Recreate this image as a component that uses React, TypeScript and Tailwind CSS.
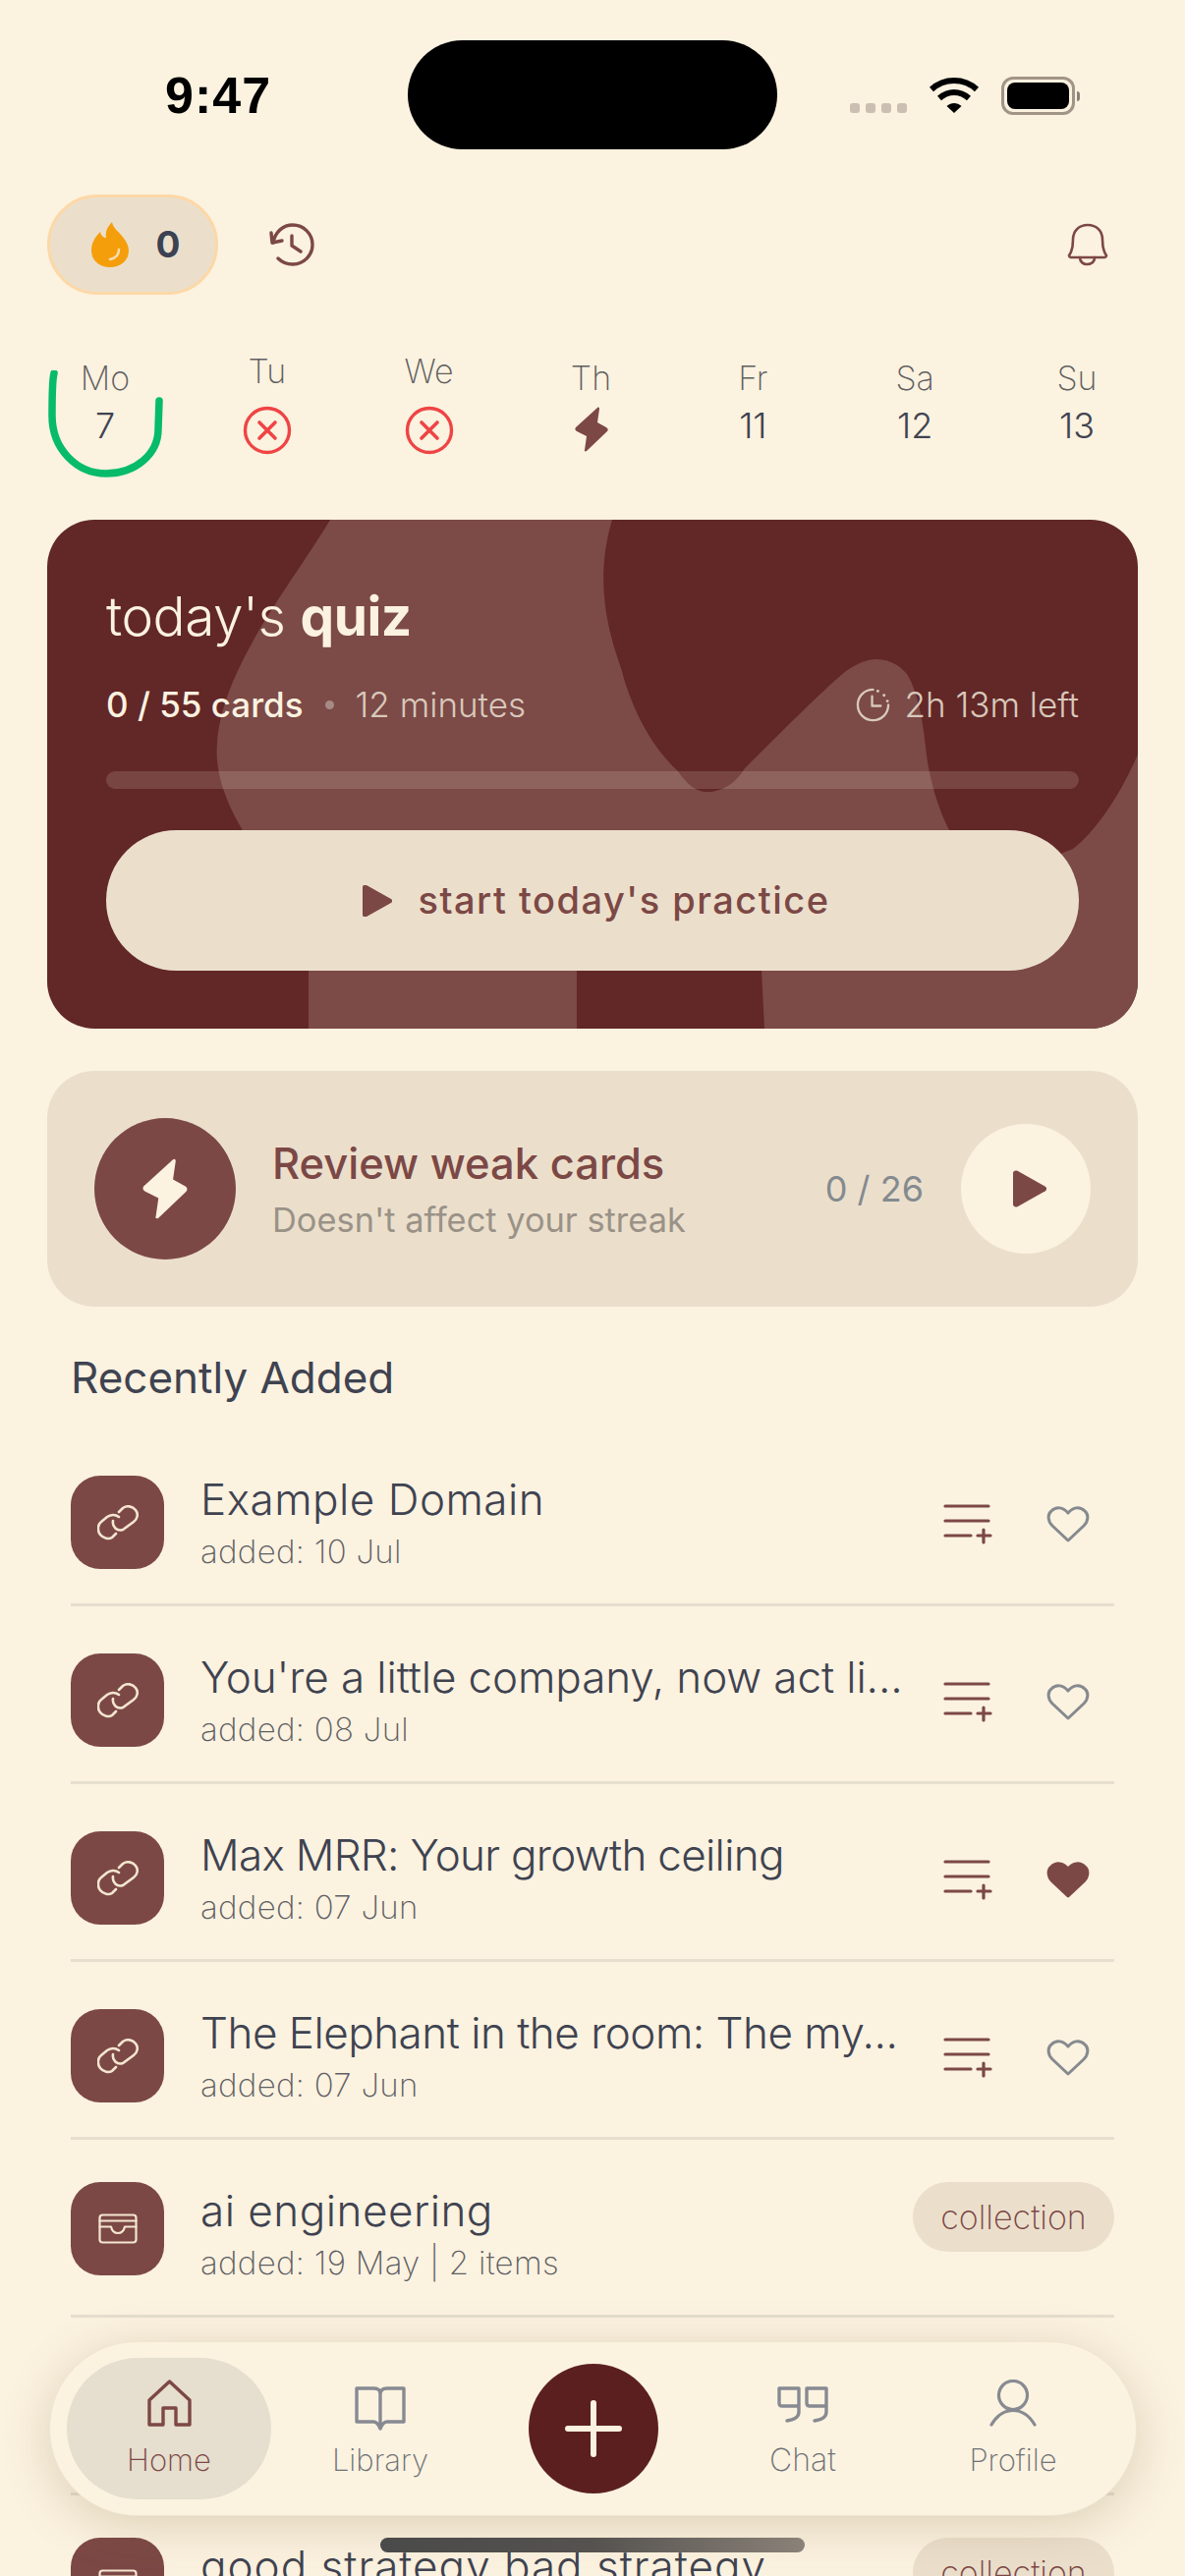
import React from "react";

const maroon = "#7c4845";
const gray = "#888a92";

function Flame() {
  return (
    <svg width="38" height="46" viewBox="0 0 38 46">
      <path d="M21 0 C22 6 27 9 31 14 C36 20 38 25 38 29 C38 39 30 46 19 46 C8 46 0 39 0 29 C0 21 4 15 9 10 C10 14 12 16 15 16 C14 10 16 5 21 0Z" fill="#f59e0b" />
      <path d="M19 38 C24 37 28 34 28 28" stroke="#f6dcae" strokeWidth="2.5" fill="none" strokeLinecap="round" />
    </svg>
  );
}

function HistoryIcon() {
  return (
    <svg width="46" height="44" viewBox="0 0 46 44" fill="none" stroke={maroon} strokeWidth="3.4" strokeLinecap="round" strokeLinejoin="round">
      <path d="M4 20 C6 9 14 2 24 2 C35 2 44 11 44 22 C44 33 35 42 24 42 C18 42 13 40 9 36" />
      <path d="M2 10 L3 20 L13 18" />
      <path d="M23 13 L23 23 L32 29" />
    </svg>
  );
}

function Bell() {
  return (
    <svg width="42" height="44" viewBox="0 0 42 44" fill="none" stroke={maroon} strokeWidth="2.6" strokeLinecap="round" strokeLinejoin="round">
      <path d="M2 33 C5 29 6 25 6 17 C6 8 12 2 21 2 C30 2 36 8 36 17 C36 25 37 29 40 33 C40 34 39 35 38 35 L4 35 C3 35 2 34 2 33Z" />
      <path d="M13 35 C13 40 17 42 20 42 C24 42 28 40 28 35" />
    </svg>
  );
}

function XCircle() {
  return (
    <svg width="50" height="50" viewBox="0 0 50 50" fill="none" stroke="#ef4444" strokeWidth="3.4" strokeLinecap="round">
      <circle cx="25" cy="25" r="22.5" />
      <path d="M17 17 L33 33 M33 17 L17 33" strokeWidth="3.6" />
    </svg>
  );
}

function Bolt({ color, w, h }: { color: string; w: number; h: number }) {
  return (
    <svg width={w} height={h} viewBox="0 0 34 46" fill={color}>
      <path d="M23 1 C24 0 25 1 25 2 L23 16 L32 21 C34 22 34 24 33 25 L12 45 C11 46 9 45 10 44 L12 30 L2 25 C0 24 0 22 1 21 Z" />
    </svg>
  );
}

function ClockDash() {
  return (
    <svg width="35" height="35" viewBox="0 0 36 36" fill="none" stroke="#d8c9bb" strokeWidth="2.4" strokeLinecap="round" strokeLinejoin="round">
      <path d="M18 2 C9 2 2 9 2 18 C2 27 9 34 18 34 C27 34 34 27 34 18" />
      <path d="M17 9 L17 19 L26 19" />
      <path d="M23 3.5 L23.1 3.5 M29.5 8 L29.6 8 M33 14 L33.1 14" strokeWidth="3" />
    </svg>
  );
}

function Play({ w, h, color }: { w: number; h: number; color: string }) {
  return (
    <svg width={w} height={h} viewBox="0 0 30 32" fill={color}>
      <path d="M0 2 C0 0 2 -1 4 0 L29 14 C30.5 15 30.5 17 29 18 L4 32 C2 33 0 32 0 30 Z" />
    </svg>
  );
}

function LinkIcon() {
  return (
    <svg width="42" height="36" viewBox="0 0 42 36" fill="none" stroke="#f4e6d0" strokeWidth="2.6" strokeLinecap="round">
      <path d="M22 12 C18 9 13 10 10 12 L4 17 C0 20 0 26 3 30 C6 34 12 35 15 33 L19 29" />
      <path d="M16 16 C15 22 20 27 26 25 L37 17 C41 14 42 9 39 5 C36 1 30 0 26 3 L22 7" />
    </svg>
  );
}

function ArchiveIcon() {
  return (
    <svg width="40" height="31" viewBox="0 0 40 31" fill="none" stroke="#f4e6d0" strokeWidth="2.2" strokeLinecap="round" strokeLinejoin="round">
      <rect x="1.5" y="1.5" width="37" height="28" rx="3" />
      <path d="M1.5 7.5 L38.5 7.5" />
      <path d="M1.5 13.5 L13 13.5 C14 18 17 20 20 20 C23 20 26 18 27 13.5 L38.5 13.5" />
    </svg>
  );
}

function ListPlus() {
  return (
    <svg width="50" height="42" viewBox="0 0 50 42" fill="none" stroke={maroon} strokeWidth="3.2" strokeLinecap="round">
      <path d="M2 2 L46 2 M2 17 L46 17 M2 32 L28 32 M35 32 L48 32 M41 26 L41 39" />
    </svg>
  );
}

function Heart({ filled }: { filled: boolean }) {
  return (
    <svg width="44" height="38" viewBox="0 0 44 38" fill={filled ? maroon : "none"} stroke={filled ? maroon : "#858a8f"} strokeWidth="3" strokeLinejoin="round">
      <path d="M22 35 L6 20 C1 15 1 8 5 5 C10 0 17 1 22 7 C27 1 34 0 39 5 C43 8 43 15 38 20 Z" />
    </svg>
  );
}

function HomeIcon() {
  return (
    <svg width="45" height="48" viewBox="0 0 45 48" fill="none" stroke={maroon} strokeWidth="3.4" strokeLinejoin="round">
      <path d="M2 21 L22.5 2 L43 21 L43 46 L29 46 L29 29 L16 29 L16 46 L2 46 Z" />
    </svg>
  );
}

function BookIcon() {
  return (
    <svg width="52" height="45" viewBox="0 0 52 45" fill="none" stroke={gray} strokeWidth="3.4" strokeLinejoin="round" strokeLinecap="round">
      <path d="M26 8 C26 3 23 2 19 2 L2 2 L2 36 L19 36 C22 36 24 38 26 43 C28 38 30 36 33 36 L50 36 L50 2 L33 2 C29 2 26 3 26 8 L26 43" />
    </svg>
  );
}

function QuoteIcon() {
  return (
    <svg width="52" height="37" viewBox="0 0 52 37" fill="none" stroke={gray} strokeWidth="3.4" strokeLinejoin="round" strokeLinecap="round">
      <path d="M22 20 L5 20 C3 20 2 19 2 17 L2 2 L22 2 L22 26 C22 31 17 34 10 35" />
      <path d="M50 20 L33 20 C31 20 30 19 30 17 L30 2 L50 2 L50 26 C50 31 45 34 38 35" />
    </svg>
  );
}

function UserIcon() {
  return (
    <svg width="48" height="48" viewBox="0 0 48 48" fill="none" stroke={gray} strokeWidth="3.2" strokeLinecap="round">
      <circle cx="24" cy="16" r="14.5" />
      <path d="M2 46 C8 36 16 31.5 24 31.5 C32 31.5 40 36 46 46" />
    </svg>
  );
}

const days = [
  { d: "Mo", n: "7", up: false },
  { d: "Tu", x: true, up: true },
  { d: "We", x: true, up: true },
  { d: "Th", bolt: true, up: false },
  { d: "Fr", n: "11", up: false },
  { d: "Sa", n: "12", up: false },
  { d: "Su", n: "13", up: false },
];

const rows = [
  { t: "Example Domain", s: "added: 10 Jul", k: "link", tr: "tracking-[0.5px]" },
  { t: "You're a little company, now act li...", s: "added: 08 Jul", k: "link", tr: "tracking-[-0.1px]" },
  { t: "Max MRR: Your growth ceiling", s: "added: 07 Jun", k: "link", fav: true, tr: "tracking-[-0.7px]" },
  { t: "The Elephant in the room: The my...", s: "added: 07 Jun", k: "link", tr: "tracking-[-0.5px]" },
  { t: "ai engineering", s: "added: 19 May | 2 items", k: "col", tr: "tracking-[0.5px]" },
  { t: "", s: "", k: "hidden", tr: "" },
  { t: "good strategy bad strategy", s: "", k: "col", tr: "tracking-[1px]" },
];

export default function App() {
  return (
    <div className="relative h-[2622px] w-[1206px] overflow-hidden bg-[#fbf2e0] font-['Inter',sans-serif] text-[#3f4350]">
      {/* status bar */}
      <div className="flex h-[198px] items-start">
        <div className="mt-[67px] w-[415px] pl-[168px] font-['Liberation_Sans',sans-serif] text-[52px] leading-[60px] font-bold tracking-[1px] text-black">9:47</div>
        <div className="mt-[41px] h-[111px] w-[376px] rounded-full bg-black" />
        <div className="mt-[78px] ml-[74px] flex items-start">
          <div className="mt-[27px] flex gap-[6px]">
            <span className="h-[10px] w-[10px] rounded-[3px] bg-[#cabfb0]" />
            <span className="h-[10px] w-[10px] rounded-[3px] bg-[#cabfb0]" />
            <span className="h-[10px] w-[10px] rounded-[3px] bg-[#cabfb0]" />
            <span className="h-[10px] w-[10px] rounded-[3px] bg-[#cabfb0]" />
          </div>
          <svg className="ml-[22px]" width="52" height="38" viewBox="0 0 52 38" fill="none" stroke="#000" strokeWidth="6">
            <path d="M3 13 C16 1 36 1 49 13" />
            <path d="M11 22 C20 14 32 14 41 22" />
            <path d="M18.5 30 L26 37 L33.5 30 C29 26 23 26 18.5 30Z" fill="#000" stroke="none" />
          </svg>
          <div className="ml-[22px] flex items-center">
            <div className="h-[39px] w-[75px] rounded-[12px] border-[3px] border-[#a19587] p-[3px]">
              <div className="h-full w-full rounded-[8px] bg-black" />
            </div>
            <div className="ml-[2px] h-[10px] w-[3px] rounded-r-full bg-[#8a8279]" />
          </div>
        </div>
      </div>

      {/* header */}
      <div className="flex h-[102px] items-center pr-[78px] pl-[48px]">
        <div className="flex h-[102px] w-[174px] items-center justify-center gap-[28px] rounded-full border-[3px] border-[#fdd8a6] bg-[#ebdfcc] pl-[6px]">
          <Flame />
          <span className="text-[37px] font-bold text-[#3b4252]">0</span>
        </div>
        <div className="ml-[52px]">
          <HistoryIcon />
        </div>
        <div className="ml-auto">
          <Bell />
        </div>
      </div>

      {/* week */}
      <div className="mt-[64px] flex h-[130px] justify-between pr-[51px] pl-[48px] text-[#5f5f5f]">
        {days.map((it) => (
          <div key={it.d} className="relative flex w-[118px] flex-col items-center">
            <div className={`text-[34px] leading-[40px] font-extralight ${it.up ? "-mt-[6px]" : "mt-[1px]"}`}>{it.d}</div>
            {it.n && <div className="mt-[6px] text-[36px] leading-[44px] font-light text-[#3f4350]">{it.n}</div>}
            {it.x && (
              <div className="mt-[15px]">
                <XCircle />
              </div>
            )}
            {it.bolt && (
              <div className="mt-[9px] ml-[2px]">
                <Bolt color={maroon} w={34} h={46} />
              </div>
            )}
            {it.d === "Mo" && (
              <svg className="absolute top-[13px] left-0" width="118" height="112" viewBox="0 0 118 112" fill="none" stroke="#07bb6a" strokeWidth="7.5" strokeLinecap="round">
                <path d="M7 3 C5 10 5 30 5 46 C5 80 30 105 60 105 C90 105 113 85 113 60 L114 31" />
              </svg>
            )}
          </div>
        ))}
      </div>

      {/* quiz card */}
      <div className="relative mx-[48px] mt-[35px] h-[518px] overflow-hidden rounded-[48px] bg-[#622727] px-[60px] pt-[67px]">
        <svg className="absolute top-0 left-0" width="1110" height="518" viewBox="48 529 1110 518" fill="#7c4a47">
          <path d="M336 529 L623 529 C605 590 618 640 632 680 C645 730 668 765 690 785 C700 800 710 806 719 806 C735 806 748 798 758 782 C775 765 835 705 854 689 C866 678 880 671 892 671 C908 671 918 680 923 686 C935 705 940 740 942 760 C945 790 955 830 975 860 L587 980 L587 1047 L314 1047 L314 980 L250 850 C225 810 219 780 221 757 C225 680 300 590 336 529 Z" />
          <path d="M1158 768 C1135 820 1110 850 1092 864 L1000 900 L775 987 L778 1047 L1158 1047 Z" />
        </svg>
        <div className="relative">
          <div className="text-[55px] leading-[62px] font-light tracking-[-0.5px] text-[#fbf2e0]">
            today's <span className="font-bold">quiz</span>
          </div>
          <div className="mt-[41px] flex h-[36px] items-center text-[35px] leading-[36px]">
            <span className="font-medium text-[#fbf2e0]">0 / 55 cards</span>
            <span className="mx-[22px] h-[9px] w-[9px] rounded-full bg-[#a68a85]" />
            <span className="font-light text-[#d8c9bb]">12 minutes</span>
            <span className="ml-auto flex items-center gap-[15px] font-light text-[#d8c9bb]">
              <ClockDash />
              2h 13m left
            </span>
          </div>
          <div className="mt-[50px] h-[18px] rounded-full bg-[#fbf2e0]/15" />
          <div className="mt-[42px] flex h-[143px] items-center justify-center gap-[26px] rounded-full bg-[#ebdfcc] pl-[8px] text-[38px] font-medium tracking-[1.5px] text-[#7c4845]">
            <Play w={30} h={32} color={maroon} />
            start today's practice
          </div>
        </div>
      </div>

      {/* review card */}
      <div className="mx-[48px] mt-[43px] flex h-[240px] items-center rounded-[48px] bg-[#ebdfcc] pr-[48px] pl-[48px]">
        <div className="flex h-[144px] w-[144px] items-center justify-center rounded-full bg-[#7c4845]">
          <Bolt color="#fbf2e0" w={46} h={62} />
        </div>
        <div className="ml-[37px] flex flex-col">
          <div className="text-[43.5px] leading-[52px] font-medium text-[#7c4845]">Review weak cards</div>
          <div className="mt-[12px] text-[34.4px] leading-[40px] text-[#9a9287]">Doesn't affect your streak</div>
        </div>
        <div className="ml-auto text-[36px] text-[#858a8f]">0 / 26</div>
        <div className="ml-[38px] flex h-[132px] w-[132px] items-center justify-center rounded-full bg-[#fbf2e0] pl-[8px]">
          <Play w={34} h={38} color={maroon} />
        </div>
      </div>

      {/* recently added */}
      <div className="mt-[47px] px-[72px] text-[44px] leading-[50px] text-[#3f4350]">Recently Added</div>

      <div className="mt-[27px] flex flex-col px-[72px]">
        {rows.map((r, i) => (
          <div key={i} className="flex h-[181px] items-start border-b-[3px] border-[#e6dece] pt-[48px]">
            {r.k !== "hidden" && (
              <>
                <div className={`flex h-[95px] w-[95px] items-center justify-center rounded-[30px] bg-[#7c4845] ${r.k === "col" ? "-mt-[5px]" : ""}`}>
                  {r.k === "link" ? <LinkIcon /> : <ArchiveIcon />}
                </div>
                <div className="-mt-[3px] ml-[37px] flex min-w-0 flex-1 flex-col">
                  <div className={`text-[44px] leading-[54px] font-light whitespace-nowrap text-[#3f4350] ${r.tr}`}>{r.t}</div>
                  {r.s && <div className="mt-[4px] text-[33px] leading-[44px] font-extralight tracking-[0.3px] text-[#5f5f63]">{r.s}</div>}
                </div>
                {r.k === "link" ? (
                  <div className="mt-[29px] flex items-center gap-[55px] pr-[25px]">
                    <ListPlus />
                    <Heart filled={!!r.fav} />
                  </div>
                ) : (
                  <div className="-mt-[5px] flex h-[71px] w-[205px] items-center justify-center rounded-full bg-[#ebdfcc] text-[34px] font-extralight text-[#7c4845]">collection</div>
                )}
              </>
            )}
          </div>
        ))}
      </div>

      {/* bottom nav */}
      <div className="absolute top-[2383px] left-[50px] flex h-[178px] w-[1107px] items-center rounded-full border border-[#efe6d2] bg-[#fbf3e0] pl-[17px] shadow-[0_10px_50px_rgba(120,90,40,0.22)]">
        <div className="flex h-[144px] w-[208px] flex-col items-center rounded-full bg-[#e6dece] pt-[22px]">
          <HomeIcon />
          <span className="mt-[16px] text-[31px] leading-[36px] font-extralight text-[#7c4845]">Home</span>
        </div>
        <div className="flex w-[222px] flex-col items-center pt-[6px]">
          <BookIcon />
          <span className="mt-[12px] text-[31px] leading-[36px] font-extralight text-[#6f7178]">Library</span>
        </div>
        <div className="ml-[40px] flex h-[132px] w-[132px] items-center justify-center rounded-full bg-[#5c1f1f]">
          <svg width="58" height="58" viewBox="0 0 58 58" stroke="#fbf2e0" strokeWidth="6" strokeLinecap="round">
            <path d="M29 3 L29 55 M3 29 L55 29" />
          </svg>
        </div>
        <div className="ml-[40px] flex w-[214px] flex-col items-center pt-[6px]">
          <QuoteIcon />
          <span className="mt-[20px] text-[32px] leading-[36px] font-extralight text-[#6f7178]">Chat</span>
        </div>
        <div className="flex w-[214px] flex-col items-center">
          <UserIcon />
          <span className="mt-[16px] text-[31px] leading-[36px] font-extralight text-[#6f7178]">Profile</span>
        </div>
      </div>

      {/* home indicator */}
      <div className="absolute top-[2583px] left-[387px] h-[15px] w-[432px] rounded-full bg-gradient-to-r from-[#4a4a4a] via-[#55524f] to-[#8b8279]" />
    </div>
  );
}
